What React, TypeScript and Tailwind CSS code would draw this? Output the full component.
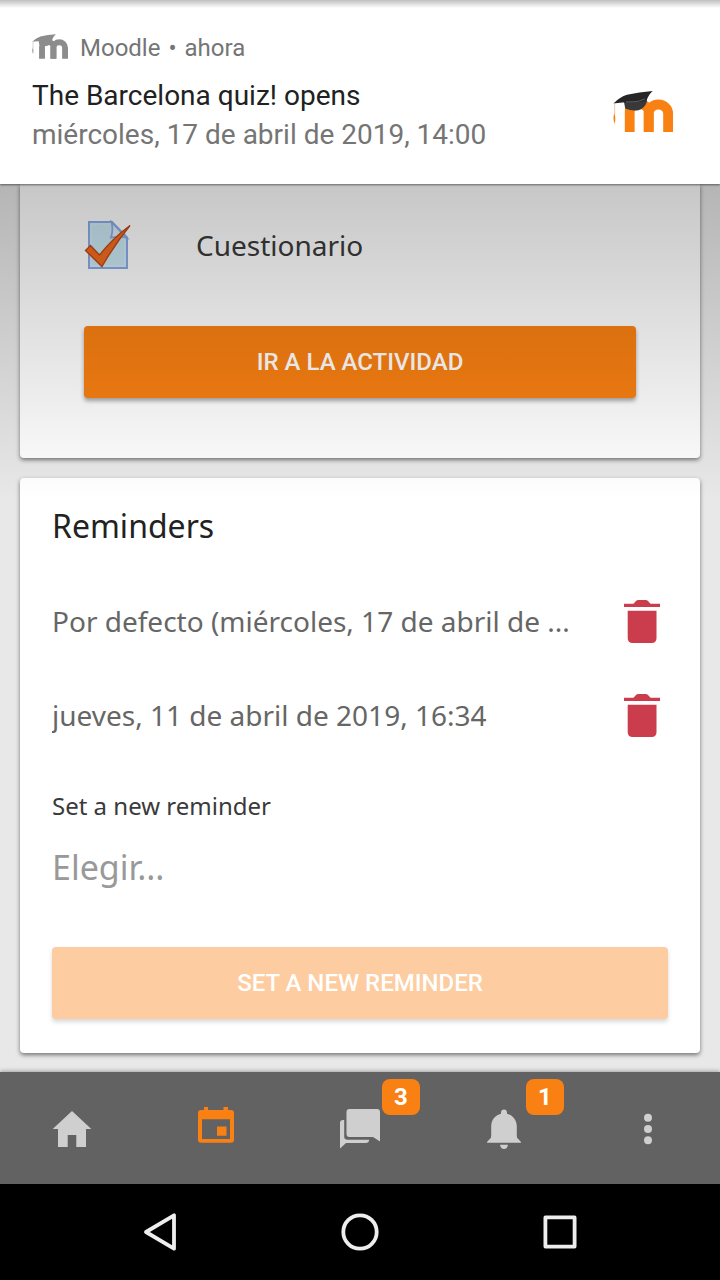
import React from 'react';
import clsx from 'clsx';

interface Reminder {
    id: number;
    text: string;
}

interface Tab {
    name: string;
    icon: React.ReactNode;
    active?: boolean;
    badge?: number;
}

const reminders: Reminder[] = [
    { id: 1, text: 'Por defecto (miércoles, 17 de abril de ...' },
    { id: 2, text: 'jueves, 11 de abril de 2019, 16:34' },
];

const MoodleLogo: React.FC<{ className: string; mono?: boolean }> = ({ className, mono = false }) => {
    const body = mono ? '#8c8c8c' : '#f98012';
    return (
        <svg viewBox="0 0 60 41" className={className} aria-hidden="true">
            <g fill="none" stroke={body} strokeWidth="9.8">
                <path d="M16.700 41V20.500a9.500 7.300 0 0 1 19 0V41" />
                <path d="M35.700 41V22.500a9.700 9 0 0 1 19.400 0V41" />
            </g>
            <path d="M11 11l1.200 6.500q7 3 13.300 1.700 6-1.600 8.500-8.700l-2-6z" fill={mono ? '#8c8c8c' : '#38383a'} />
            <path d="M.4 12.400Q7 6 14 3.800 26 1 39.700 0 35.500 3.500 33.500 9.800 29 11 23 11.300 11 11 .4 12.400z" fill={mono ? '#8c8c8c' : '#262628'} />
            {!mono && <path d="M13 11l11-.4 8-2.600" fill="none" stroke="#5f5c5b" strokeWidth="1" />}
            <path d="M1.700 12.500V23" fill="none" stroke={mono ? '#a8a8a8' : '#fbb478'} strokeWidth=".8" />
            <path d="M1.400 22Q-.6 28 1.800 33q1.200-6-.4-11z" fill={body} />
        </svg>
    );
};

const QuizIcon = () => (
    <svg viewBox="0 0 48 50" className="h-[50px] w-12 shrink-0" aria-hidden="true">
        <path d="M5 2h23l15 15.500V48H5z" fill="#cbe8f4" stroke="#8aabea" strokeWidth="2" />
        <path d="M7 4h20v14h14v28H7z" fill="none" stroke="#d9eefa" strokeWidth="1" />
        <path d="M27.500 2q2 8-.5 15.500 9-1.500 16 .5z" fill="#e0ecfa" stroke="#8aabea" strokeWidth="1.800" />
        <path d="M1.500 30.500L6.500 25.500 15.500 35Q29 18 46 5.500 31 24 18 46.500z" fill="#f36c1f" stroke="#bd4a18" strokeWidth="1.400" />
    </svg>
);

const TrashIcon = () => (
    <svg viewBox="0 0 36 43" className="h-[43px] w-9" fill="#cb3d4d" aria-hidden="true">
        <path d="M0 3.800h9.500l2.500-2.800q.9-1 2.200-1h7.600q1.300 0 2.200 1l2.500 2.800H36V7H0z" />
        <path d="M3.700 10.700h28.800V38q0 5-5 5H8.700q-5 0-5-5z" />
    </svg>
);

const TabIcon: React.FC<{ children: React.ReactNode }> = ({ children }) => (
    <svg viewBox="0 0 48 48" className="size-12" fill="currentColor" aria-hidden="true">
        {children}
    </svg>
);

const tabs: Tab[] = [
    {
        name: 'Inicio',
        icon: <path d="M24 6l19.300 18H38v18h-9.700V30h-8.600v12H10V24H4.700z" />,
    },
    {
        name: 'Calendario',
        active: true,
        icon: (
            <path
                fillRule="evenodd"
                d="M12 2h4v3h15.500V2H36v3h3q3 0 3 3v26.700q0 3-3 3H9q-3 0-3-3V8q0-3 3-3h3zM10 14.300V34h28V14.300zM25 21.500h9.500v9.300H25z"
            />
        ),
    },
    {
        name: 'Mensajes',
        badge: 3,
        icon: (
            <>
                <path d="M13.500 4H41q3 0 3 3v29.500L37 32H13.500q-3 0-3-3V7q0-3 3-3z" />
                <path d="M8.200 15v16.500q0 3.300 3.300 3.300H33.200q-.4 3.200-3.400 3.200H10L4 43.500V18q0-3 3-3z" />
            </>
        ),
    },
    {
        name: 'Notificaciones',
        badge: 1,
        icon: (
            <>
                <path d="M24 4.600c-1.800 0-3 1.300-3 3v1.200c-6 1.500-9.800 6.500-9.800 12.700V31q0 1.800-1.400 3.100L7 37v.8h34V37l-2.800-2.900q-1.400-1.300-1.400-3.100v-9.500c0-6.200-3.800-11.200-9.800-12.700V7.600c0-1.700-1.200-3-3-3z" />
                <path d="M20 39.700h8q-.6 4.200-4 4.200t-4-4.200z" />
            </>
        ),
    },
    {
        name: 'Más',
        icon: (
            <>
                <circle cx="24" cy="12.700" r="4" />
                <circle cx="24" cy="24" r="4" />
                <circle cx="24" cy="35.300" r="4" />
            </>
        ),
    },
];

const Notification = () => (
    <header className="relative z-10 bg-white px-8 pt-8 pb-[30px] font-[Roboto,sans-serif] shadow-[0_1px_2px_rgba(0,0,0,0.5)]">
        <div className="absolute inset-x-0 top-0 h-2 bg-linear-to-b from-black/25 to-transparent" />
        <div className="flex h-8 items-center gap-3 text-2xl text-[#757575]">
            <MoodleLogo mono className="mb-1 h-[25px] w-9" />
            <p className="flex gap-2">
                <span>Moodle</span>
                <span>•</span>
                <span>ahora</span>
            </p>
        </div>
        <div className="mt-3 flex items-center justify-between pr-[15px]">
            <div className="min-w-0 text-[28px] leading-[39px]">
                <h1 className="truncate text-[#212121]">The Barcelona quiz! opens</h1>
                <p className="truncate text-[#757575]">miércoles, 17 de abril de 2019, 14:00</p>
            </div>
            <MoodleLogo className="mb-2 h-[41px] w-[60px] shrink-0" />
        </div>
    </header>
);

const ReminderRow: React.FC<{ reminder: Reminder }> = ({ reminder }) => (
    <li className="flex h-[94px] items-center justify-between gap-4 pr-2">
        <span className="truncate text-[28px] leading-10 text-[#666]">{reminder.text}</span>
        <button type="button" aria-label="Eliminar" className="shrink-0">
            <TrashIcon />
        </button>
    </li>
);

const TabBar = () => (
    <nav className="relative grid grid-cols-5 bg-[#626262] shadow-[0_-1px_4px_rgba(0,0,0,0.3)]">
        {tabs.map((tab) => (
            <a
                key={tab.name}
                href="#"
                aria-label={tab.name}
                className={clsx('relative flex h-28 items-center justify-center pt-0.5', tab.active ? 'text-[#f98012]' : 'text-[#cfcfcf]')}
            >
                <TabIcon>{tab.icon}</TabIcon>
                {tab.badge && (
                    <span className="absolute top-[7px] left-1/2 ml-[22px] flex h-9 w-[38px] items-center justify-center rounded-lg bg-[#f98012] font-[Roboto,sans-serif] text-2xl font-bold text-white">
                        {tab.badge}
                    </span>
                )}
            </a>
        ))}
    </nav>
);

const SystemBar = () => (
    <div className="grid h-24 grid-cols-3 place-items-center bg-black px-[60px]">
        <button type="button" aria-label="Atrás">
            <svg viewBox="0 0 40 40" className="size-10" fill="none" stroke="#eee" strokeWidth="3.800" strokeLinejoin="round">
                <path d="M34 3.300v33.400L6 20z" />
            </svg>
        </button>
        <button type="button" aria-label="Pantalla de inicio">
            <svg viewBox="0 0 40 40" className="size-10" fill="none" stroke="#eee" strokeWidth="3.800">
                <circle cx="20" cy="20" r="16.700" />
            </svg>
        </button>
        <button type="button" aria-label="Recientes">
            <svg viewBox="0 0 40 40" className="size-10" fill="none" stroke="#eee" strokeWidth="3.800" strokeLinejoin="round">
                <rect x="5.400" y="5.400" width="29.200" height="29.200" />
            </svg>
        </button>
    </div>
);

const App: React.FC = () => {
    return (
        <div className="flex min-h-screen flex-col bg-[#e8e8e8] font-['Noto_Sans',sans-serif]">
            <Notification />

            <main className="relative flex flex-1 flex-col gap-5 px-5 pb-[19px]">
                <section className="rounded-b bg-white px-16 pt-9 pb-[60px] shadow-[0_2px_4px_rgba(0,0,0,0.5)]">
                    <div className="flex items-center gap-16">
                        <QuizIcon />
                        <p className="text-[28px] leading-10 text-[#3a3a3a]">Cuestionario</p>
                    </div>
                    <button
                        type="button"
                        className="mt-14 h-[72px] w-full rounded bg-[#f98012] font-[Roboto,sans-serif] text-2xl font-medium text-white uppercase shadow-[0_3px_4px_rgba(0,0,0,0.35)]"
                    >
                        Ir a la actividad
                    </button>
                </section>

                <section className="rounded bg-white px-8 pt-6 pb-[34px] shadow-[0_2px_4px_rgba(0,0,0,0.5)]" aria-labelledby="reminders-heading">
                    <h2 id="reminders-heading" className="text-[32px] leading-[48px] text-[#222]">Reminders</h2>
                    <ul className="mt-6">
                        {reminders.map((reminder) => (
                            <ReminderRow key={reminder.id} reminder={reminder} />
                        ))}
                    </ul>
                    <label htmlFor="new-reminder" className="mt-7 block text-2xl leading-8 text-[#3a3a3a]">
                        Set a new reminder
                    </label>
                    <select id="new-reminder" defaultValue="" className="mt-5 block h-12 w-full appearance-none text-[34px] text-[#999]">
                        <option value="">Elegir...</option>
                    </select>
                    <button
                        type="button"
                        disabled
                        className="mt-[57px] h-[72px] w-full rounded bg-[#fdcca0] font-[Roboto,sans-serif] text-2xl font-medium text-white uppercase shadow-[0_3px_4px_rgba(0,0,0,0.15)]"
                    >
                        Set a new reminder
                    </button>
                </section>

                <div className="pointer-events-none absolute inset-x-0 top-0 h-[316px] bg-linear-to-b from-black/22 to-transparent" />
            </main>

            <TabBar />
            <SystemBar />
        </div>
    );
};

export default App;
